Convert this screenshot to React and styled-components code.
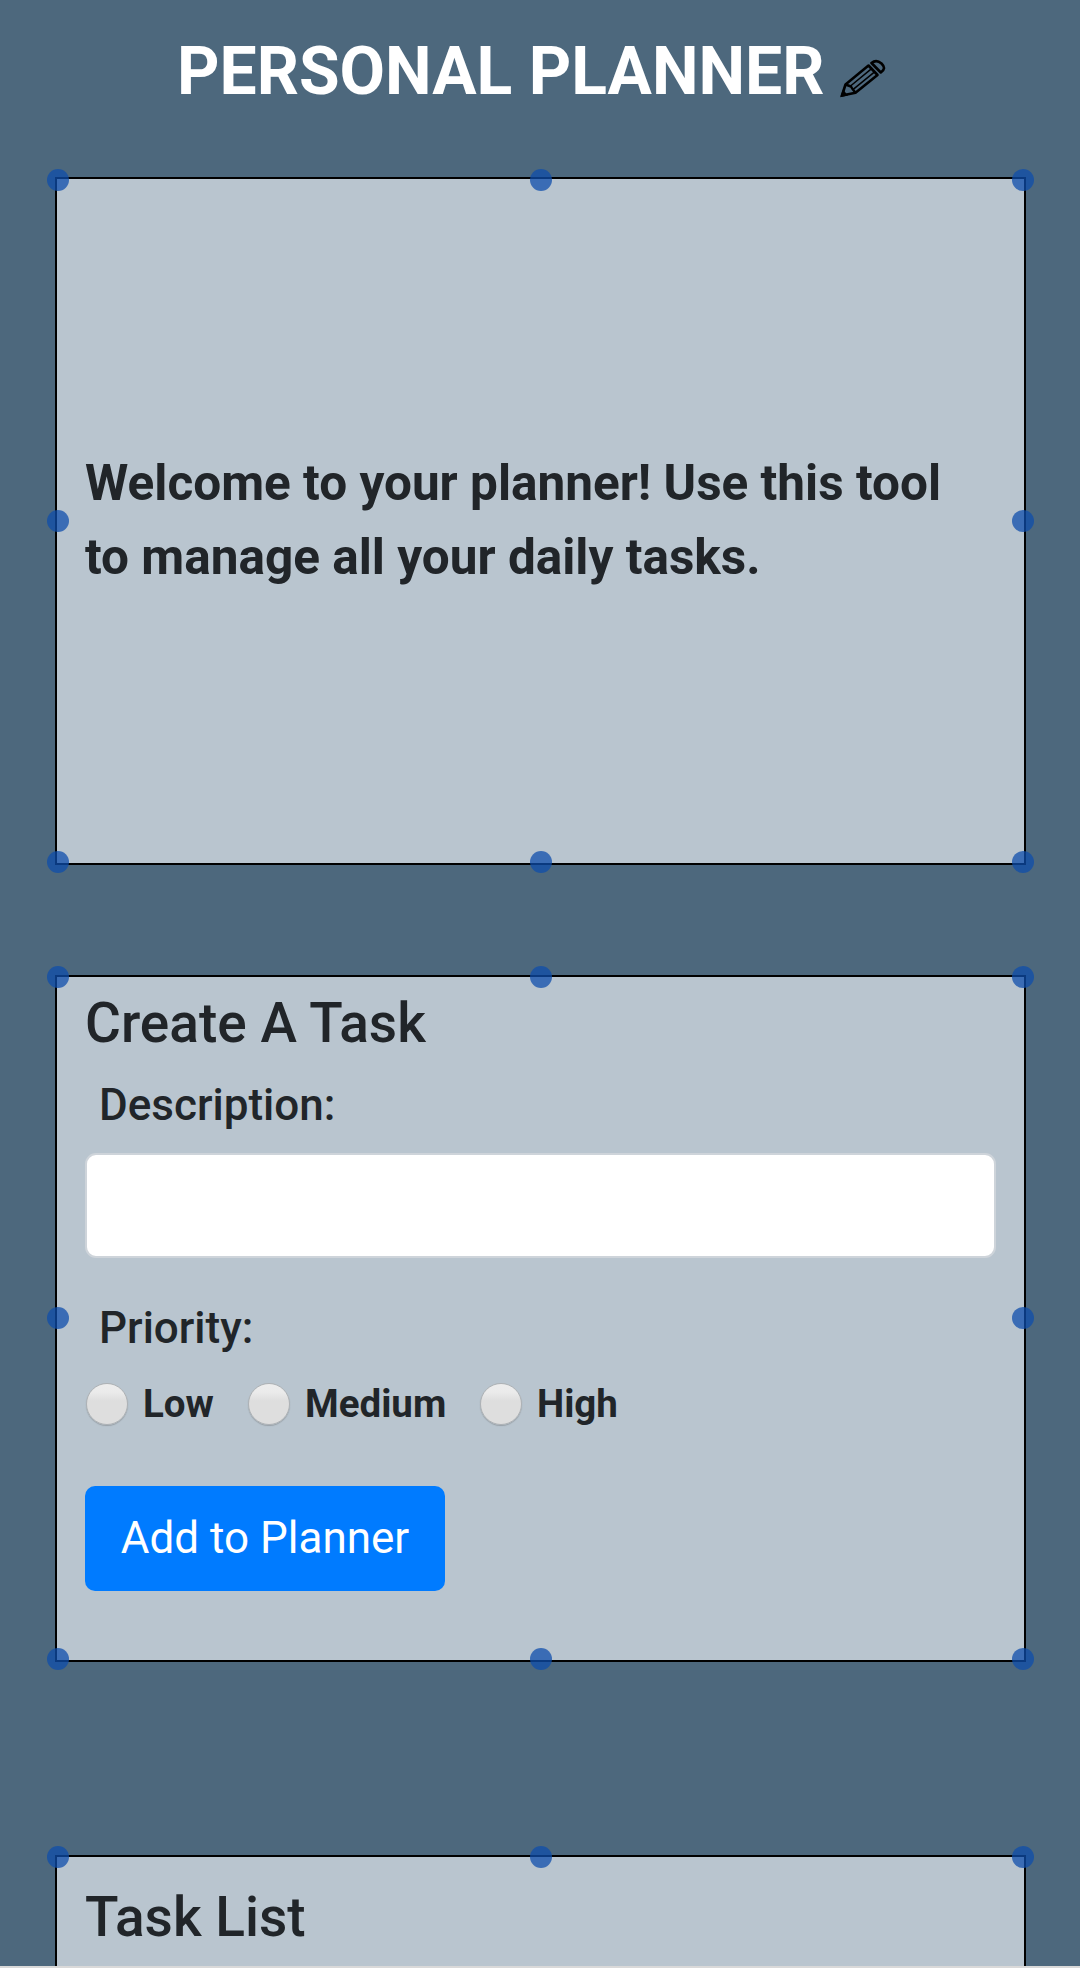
import React from 'react';
import styled, { createGlobalStyle } from 'styled-components';

const Global = createGlobalStyle`
  *, *::before, *::after { box-sizing: border-box; }
  html, body { margin: 0; height: 1968px; overflow: hidden; }
  body {
    background: #4d687d;
    color: #212529;
    font-family: Roboto, "Liberation Sans", sans-serif;
  }
`;

const Page = styled.div`
  display: flex;
  flex-direction: column;
  height: 1968px;
  overflow: hidden;
`;

const Planner = styled.main`
  display: flex;
  flex-direction: column;
  flex: 0 0 1966px;
  padding: 0 54px 0 55px;
  overflow: hidden;
`;

const Header = styled.header`
  display: flex;
  align-items: flex-start;
  height: 177px;
  flex: none;
  padding: 32px 0 0 122px;
`;

const Title = styled.h1`
  margin: 0;
  width: 663px;
  color: #fff;
  font-size: 66px;
  font-weight: 700;
  line-height: 80px;
  white-space: nowrap;
`;

const PencilIcon = styled.svg`
  width: 50px;
  height: 42px;
  margin-top: 26px;
`;

const Card = styled.section`
  position: relative;
  display: flex;
  flex-direction: column;
  flex: none;
  justify-content: ${(p) => (p.$centered ? 'center' : 'flex-start')};
  height: ${(p) => p.$height || 688}px;
  margin-bottom: ${(p) => p.$gap || 0}px;
  padding: ${(p) => p.$top || 0}px 28px ${(p) => (p.$centered ? 2 : 0)}px;
  background: #b9c5cf;
  border: 2px solid #000;
`;

const Handle = styled.span`
  position: absolute;
  left: ${(p) => p.$x};
  top: ${(p) => p.$y};
  width: 22px;
  height: 22px;
  margin: -11px 0 0 -11px;
  border-radius: 50%;
  background: rgba(13, 77, 172, 0.74);
`;

const Welcome = styled.p`
  margin: 0;
  font-size: 49.5px;
  font-weight: 700;
  line-height: 74px;
`;

const Heading = styled.h4`
  margin: 0;
  font-size: 55px;
  font-weight: 500;
  line-height: 68px;
`;

const FieldLabel = styled.label`
  margin: ${(p) => p.$top}px 0 0 14px;
  font-size: 44px;
  font-weight: 500;
  line-height: 54px;
`;

const Input = styled.input`
  width: 100%;
  height: 105px;
  margin-top: 21px;
  padding: 0 28px;
  font: inherit;
  font-size: 44px;
  background: #fff;
  border: 2px solid #ced4da;
  border-radius: 11px;
  outline: none;
`;

const RadioRow = styled.div`
  display: flex;
  align-items: center;
  height: 48px;
  margin-top: 25px;
`;

const RadioLabel = styled.label`
  display: flex;
  align-items: center;
  width: ${(p) => p.$width}px;
  font-size: 38.5px;
  font-weight: 700;
  line-height: 46px;
`;

const Radio = styled.input`
  appearance: none;
  flex: none;
  width: 42px;
  height: 42px;
  margin: 0 15px 0 1px;
  border: 1px solid #aeb2b5;
  border-radius: 50%;
  background: linear-gradient(#ededed 0%, #ebebeb 20%, #dedede 42%, #dedede 100%);
  box-shadow: 0 1px 1px rgba(80, 80, 80, 0.3);
`;

const SubmitButton = styled.button`
  width: 360px;
  height: 105px;
  margin-top: 58px;
  padding: 0 0 2px;
  color: #fff;
  font-family: inherit;
  font-size: 44px;
  font-weight: 400;
  line-height: 60px;
  background: #007bff;
  border: 0;
  border-radius: 10px;
`;

const BottomRule = styled.footer`
  flex: none;
  height: 2px;
  background: #d9d9d9;
`;

const columns = ['1px', '50%', 'calc(100% - 1px)'];

function SelectionHandles({ rows }) {
  return rows.map((y, r) =>
    columns.map((x, c) =>
      r === 1 && c === 1 ? null : <Handle key={`${r}-${c}`} $x={x} $y={y} />
    )
  );
}

const priorities = [
  { name: 'Low', width: 162 },
  { name: 'Medium', width: 232 },
  { name: 'High', width: 150 },
];

export default function App() {
  return (
    <Page>
      <Global />
      <Planner>
        <Header>
          <Title>PERSONAL PLANNER</Title>
          <PencilIcon viewBox="840 58 50 42" fill="none" stroke="#000" strokeWidth="2.6" strokeLinejoin="round">
            {/* barrel and sharpened tip */}
            <path d="M842 95.5 L845.5 84.5 L868.5 65.5 L877.5 75 L855.5 92.7 Z" />
            <path d="M845.5 84.5 L851 86.5 L852.5 89 L855.5 92.7" strokeWidth="2.4" />
            {/* barrel facets */}
            <path d="M850.5 86 L871 69.2 M853.5 89.2 L874 72.4" strokeWidth="1.5" />
            {/* eraser */}
            <path d="M871.5 63 C874.5 60.5 878 60.5 881.5 63.5 C885 67 885 69.5 880.8 72.5 Z" />
            <path d="M840 97.2 L843 89.5 L848 95.5 Z" fill="#000" stroke="none" />
          </PencilIcon>
        </Header>

        <Card $centered $gap={110}>
          <Welcome>Welcome to your planner! Use this tool to manage all your daily tasks.</Welcome>
          <SelectionHandles rows={['1px', '50%', 'calc(100% - 1px)']} />
        </Card>

        <Card $height={687} $gap={193} $top={12}>
          <Heading>Create A Task</Heading>
          <FieldLabel $top={21} htmlFor="description">Description:</FieldLabel>
          <Input id="description" type="text" />
          <FieldLabel as="div" $top={43}>Priority:</FieldLabel>
          <RadioRow>
            {priorities.map((p) => (
              <RadioLabel key={p.name} $width={p.width}>
                <Radio type="radio" name="priority" value={p.name} />
                {p.name}
              </RadioLabel>
            ))}
          </RadioRow>
          <SubmitButton type="button">Add to Planner</SubmitButton>
          <SelectionHandles rows={['0px', 'calc(50% - 0.5px)', 'calc(100% - 1px)']} />
        </Card>

        <Card $top={26}>
          <Heading>Task List</Heading>
          <SelectionHandles rows={['0px', '50%', 'calc(100% - 1px)']} />
        </Card>
      </Planner>
      <BottomRule />
    </Page>
  );
}
